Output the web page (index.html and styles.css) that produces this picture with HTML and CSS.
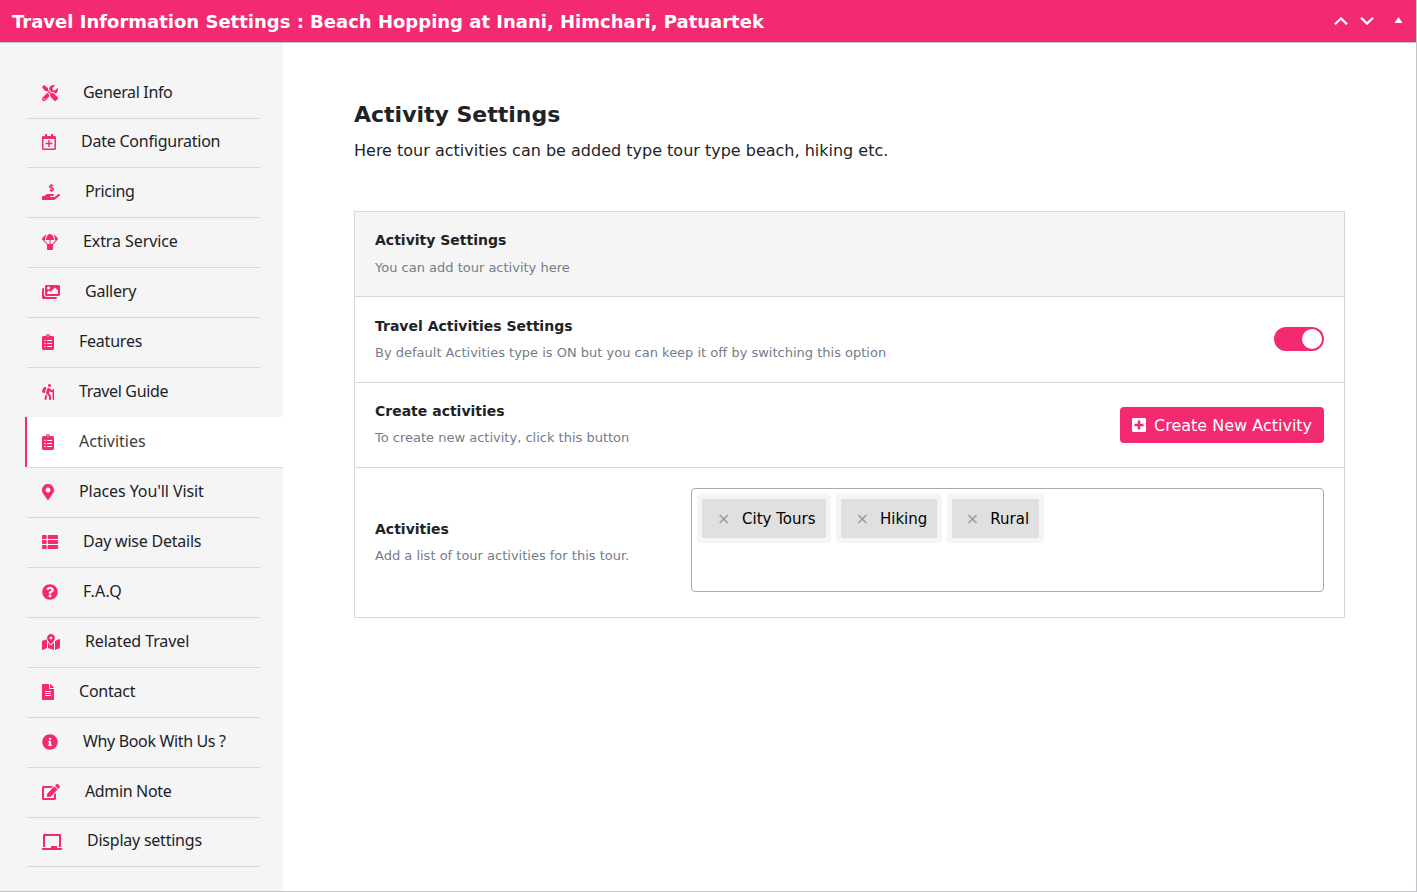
FILE: index.html
```html
<!DOCTYPE html>
<html lang="en">
<head>
<meta charset="utf-8">
<title>Travel Information Settings</title>
<link rel="stylesheet" href="styles.css">
</head>
<body>
<div class="metabox">
  <header class="bar">
    <h1 class="bar-title">Travel Information Settings : Beach Hopping at Inani, Himchari, Patuartek</h1>
    <div class="bar-actions">
      <svg class="chev" width="14" height="8" viewBox="0 0 14 8"><path d="M1 7.2 7 1.4l6 5.800"/></svg>
      <svg class="chev" width="14" height="8" viewBox="0 0 14 8"><path d="M1 .8l6 5.800L13 .8"/></svg>
      <svg class="tri" width="9" height="6" viewBox="0 0 9 6"><path d="M4.500 0l4 6h-8z"/></svg>
    </div>
  </header>
  <div class="body">
    <nav class="side">
      <a class="item"><svg class="ico" width="16" height="16" viewBox="0 0 512 512"><path d="M501.100 395.700L384 278.600c-23.100-23.100-57.600-27.600-85.400-13.900L192 158.100V96L64 0 0 64l96 128h62.100l106.600 106.600c-13.600 27.800-9.200 62.300 13.900 85.400l117.100 117.100c14.600 14.600 38.200 14.600 52.700 0l52.700-52.700c14.500-14.600 14.500-38.200 0-52.700zM331.700 225c28.300 0 54.900 11 74.900 31l19.400 19.400c15.800-6.900 30.800-16.500 43.800-29.500 37.100-37.100 49.700-89.300 37.900-136.700-2.200-9-13.500-12.100-20.100-5.500l-74.400 74.400-67.900-11.300L334 98.900l74.400-74.400c6.600-6.600 3.400-17.900-5.700-20.200-47.400-11.700-99.600.9-136.600 37.900-28.500 28.500-41.900 66.100-41.200 103.600l82.100 82.100c8.100-1.900 16.500-2.900 24.700-2.900zm-103.900 82l-56.700-56.700L18.700 402.800c-25 25-25 65.500 0 90.500s65.500 25 90.500 0l123.600-123.600c-7.600-19.900-9.900-41.600-5-62.700zM64 472c-13.200 0-24-10.800-24-24 0-13.300 10.700-24 24-24s24 10.700 24 24c0 13.200-10.700 24-24 24z"/></svg><span class="lbl lbl-tight">General Info</span></a>
      <a class="item item-short item-up"><svg class="ico" width="14" height="16" viewBox="0 0 448 512"><path d="M336 292v24c0 6.600-5.400 12-12 12h-76v76c0 6.600-5.400 12-12 12h-24c-6.600 0-12-5.400-12-12v-76h-76c-6.600 0-12-5.400-12-12v-24c0-6.600 5.400-12 12-12h76v-76c0-6.600 5.400-12 12-12h24c6.600 0 12 5.400 12 12v76h76c6.600 0 12 5.400 12 12zm112-180v352c0 26.500-21.500 48-48 48H48c-26.500 0-48-21.500-48-48V112c0-26.500 21.500-48 48-48h48V12c0-6.600 5.400-12 12-12h40c6.600 0 12 5.400 12 12v52h128V12c0-6.600 5.400-12 12-12h40c6.600 0 12 5.400 12 12v52h48c26.500 0 48 21.500 48 48zm-48 346V160H48v298c0 3.300 2.700 6 6 6h340c3.300 0 6-2.700 6-6z"/></svg><span class="lbl">Date Configuration</span></a>
      <a class="item"><svg class="ico" width="18" height="16" viewBox="0 0 576 512"><path d="M271.060,144.300l54.270,14.300a8.590,8.590,0,0,1,6.630,8.100c0,4.600-4.090,8.400-9.120,8.400h-35.600a30,30,0,0,1-11.190-2.200c-5.240-2.200-11.280-1.700-15.300,2l-19,17.500a11.680,11.680,0,0,0-2.250,2.660,11.420,11.420,0,0,0,3.880,15.740,83.770,83.770,0,0,0,34.510,11.500V240c0,8.800,7.830,16,17.370,16h17.370c9.550,0,17.380-7.200,17.380-16V222.400c32.930-3.600,57.840-31,53.500-63-3.150-23-22.460-41.300-46.560-47.700L282.680,97.400a8.590,8.590,0,0,1-6.630-8.100c0-4.600,4.090-8.400,9.120-8.400h35.600A30,30,0,0,1,332,83.100c5.230,2.200,11.280,1.700,15.300-2l19-17.500A11.310,11.310,0,0,0,368.470,61a11.430,11.430,0,0,0-3.840-15.780,83.820,83.820,0,0,0-34.520-11.500V16c0-8.800-7.820-16-17.370-16H295.370C285.820,0,278,7.200,278,16V33.600c-32.890,3.600-57.850,31-53.510,63C227.630,119.600,247,137.900,271.060,144.300ZM565.270,328.100c-11.800-10.700-30.200-10-42.600,0L430.270,402a63.640,63.640,0,0,1-40,14H272a16,16,0,0,1,0-32h78.290c15.900,0,30.710-10.900,33.250-26.600a31.200,31.200,0,0,0,.46-5.460A32,32,0,0,0,352,320H192a117.660,117.660,0,0,0-74.100,26.290L71.400,384H16A16,16,0,0,0,0,400v96a16,16,0,0,0,16,16H372.770a64,64,0,0,0,40-14L564,377a32,32,0,0,0,1.280-48.900Z"/></svg><span class="lbl lbl-tight">Pricing</span></a>
      <a class="item"><svg class="ico" width="16" height="16" viewBox="0 0 512 512"><path d="M511.900 175c-9.100-75.600-78.400-132.400-158.300-158.700C390 55.700 416 116.900 416 192h28.100L327.500 321.500c-2.500-.6-4.800-1.500-7.500-1.500h-48V192h112C384 76.800 315.100 0 256 0S128 76.800 128 192h112v128h-48c-2.700 0-5 .9-7.500 1.500L67.900 192H96c0-75.100 26-136.300 62.400-175.700C78.500 42.700 9.200 99.500.1 175c-1.100 9.100 6.800 17 16 17h8.700l136.700 151.900c-.7 2.600-1.600 5.200-1.600 8.100v128c0 17.700 14.300 32 32 32h128c17.700 0 32-14.300 32-32V352c0-2.900-.9-5.400-1.600-8.100L487.100 192h8.700c9.300 0 17.200-7.800 16.100-17z"/></svg><span class="lbl lbl-wide">Extra Service</span></a>
      <a class="item"><svg class="ico" width="18" height="16" viewBox="0 0 576 512"><path d="M480 416v16c0 26.510-21.490 48-48 48H48c-26.510 0-48-21.490-48-48V176c0-26.510 21.490-48 48-48h16v208c0 44.112 35.888 80 80 80h336zm96-80V80c0-26.510-21.490-48-48-48H144c-26.510 0-48 21.490-48 48v256c0 26.510 21.490 48 48 48h384c26.510 0 48-21.490 48-48zM256 128c0 26.510-21.490 48-48 48s-48-21.490-48-48 21.490-48 48-48 48 21.490 48 48zm-96 144l55.515-55.515c4.686-4.686 12.284-4.686 16.971 0L272 256l135.515-135.515c4.686-4.686 12.284-4.686 16.971 0L512 208v112H160v-48z"/></svg><span class="lbl">Gallery</span></a>
      <a class="item"><svg class="ico" width="12" height="16" viewBox="0 0 384 512"><path id="clipboard" d="M336 64h-80c0-35.300-28.700-64-64-64s-64 28.700-64 64H48C21.500 64 0 85.500 0 112v352c0 26.500 21.500 48 48 48h288c26.500 0 48-21.500 48-48V112c0-26.500-21.500-48-48-48zM96 424c-13.300 0-24-10.700-24-24s10.700-24 24-24 24 10.700 24 24-10.700 24-24 24zm0-96c-13.300 0-24-10.700-24-24s10.700-24 24-24 24 10.700 24 24-10.700 24-24 24zm0-96c-13.300 0-24-10.700-24-24s10.700-24 24-24 24 10.700 24 24-10.700 24-24 24zm96-192c13.300 0 24 10.700 24 24s-10.700 24-24 24-24-10.700-24-24 10.700-24 24-24zm128 368c0 4.400-3.600 8-8 8H168c-4.400 0-8-3.600-8-8v-16c0-4.400 3.600-8 8-8h144c4.400 0 8 3.600 8 8v16zm0-96c0 4.400-3.600 8-8 8H168c-4.400 0-8-3.600-8-8v-16c0-4.400 3.600-8 8-8h144c4.400 0 8 3.600 8 8v16zm0-96c0 4.400-3.600 8-8 8H168c-4.400 0-8-3.600-8-8v-16c0-4.400 3.600-8 8-8h144c4.400 0 8 3.600 8 8v16z"/></svg><span class="lbl">Features</span></a>
      <a class="item"><svg class="ico" width="12" height="16" viewBox="0 0 384 512"><path d="M80.950 472.230c-4.280 17.160 6.140 34.530 23.280 38.810 2.610.66 5.220.95 7.800.95 14.330 0 27.370-9.700 31.020-24.230l25.240-100.970-52.780-52.780-34.560 138.220zm14.890-196.120L137 117c2.190-8.420-3.140-16.950-11.920-19.060-43.880-10.520-88.350 15.070-99.320 57.170L.49 253.240c-2.190 8.420 3.140 16.950 11.920 19.060l63.560 15.250c8.790 2.100 17.680-3.020 19.870-11.440zM368 160h-16c-8.840 0-16 7.160-16 16v16h-34.750l-46.780-46.780C243.380 134.110 228.610 128 212.910 128c-27.020 0-50.470 18.300-57.030 44.520l-26.920 107.720a32.012 32.012 0 0 0 8.420 30.390L224 397.250V480c0 17.670 14.330 32 32 32s32-14.330 32-32v-82.750c0-17.090-6.660-33.160-18.750-45.250l-46.820-46.820c.15-.5.49-.89.62-1.410l19.890-79.570 22.430 22.430c6 6 14.140 9.380 22.620 9.380h48v240c0 8.840 7.160 16 16 16h16c8.840 0 16-7.160 16-16V176c.01-8.840-7.150-16-15.990-16zM240 96c26.510 0 48-21.490 48-48S266.510 0 240 0s-48 21.490-48 48 21.490 48 48 48z"/></svg><span class="lbl lbl-tight">Travel Guide</span></a>
      <a class="item item-active"><svg class="ico" width="12" height="16" viewBox="0 0 384 512"><use href="#clipboard"/></svg><span class="lbl lbl-active">Activities</span></a>
      <a class="item"><svg class="ico" width="12" height="16" viewBox="0 0 384 512"><path d="M172.268 501.670C26.970 291.031 0 269.413 0 192 0 85.961 85.961 0 192 0s192 85.961 192 192c0 77.413-26.970 99.031-172.268 309.670-9.535 13.774-29.930 13.773-39.464 0zM192 272c44.183 0 80-35.817 80-80s-35.817-80-80-80-80 35.817-80 80 35.817 80 80 80z"/></svg><span class="lbl lbl-wide">Places You'll Visit</span></a>
      <a class="item"><svg class="ico" width="16" height="16" viewBox="0 0 512 512"><path d="M149.333 216v80c0 13.255-10.745 24-24 24H24c-13.255 0-24-10.745-24-24v-80c0-13.255 10.745-24 24-24h101.333c13.255 0 24 10.745 24 24zM0 376v80c0 13.255 10.745 24 24 24h101.333c13.255 0 24-10.745 24-24v-80c0-13.255-10.745-24-24-24H24c-13.255 0-24 10.745-24 24zM125.333 32H24C10.745 32 0 42.745 0 56v80c0 13.255 10.745 24 24 24h101.333c13.255 0 24-10.745 24-24V56c0-13.255-10.745-24-24-24zm80 448H488c13.255 0 24-10.745 24-24v-80c0-13.255-10.745-24-24-24H205.333c-13.255 0-24 10.745-24 24v80c0 13.255 10.745 24 24 24zm-24-424v80c0 13.255 10.745 24 24 24H488c13.255 0 24-10.745 24-24V56c0-13.255-10.745-24-24-24H205.333c-13.255 0-24 10.745-24 24zm24 264H488c13.255 0 24-10.745 24-24v-80c0-13.255-10.745-24-24-24H205.333c-13.255 0-24 10.745-24 24v80c0 13.255 10.745 24 24 24z"/></svg><span class="lbl">Day wise Details</span></a>
      <a class="item"><svg class="ico" width="16" height="16" viewBox="0 0 512 512"><path d="M504 256c0 136.997-111.043 248-248 248S8 392.997 8 256C8 119.083 119.043 8 256 8s248 111.083 248 248zM262.655 90c-54.497 0-89.255 22.957-116.549 63.758-3.536 5.286-2.353 12.415 2.715 16.258l34.699 26.310c5.205 3.947 12.621 3.008 16.665-2.122 17.864-22.658 30.113-35.797 57.303-35.797 20.429 0 45.698 13.148 45.698 32.958 0 14.976-12.363 22.667-32.534 33.976C247.128 238.528 216 254.941 216 296v4c0 6.627 5.373 12 12 12h56c6.627 0 12-5.373 12-12v-1.333c0-28.462 83.186-29.647 83.186-106.667 0-58.002-60.165-102-116.531-102zM256 338c-25.365 0-46 20.635-46 46 0 25.364 20.635 46 46 46s46-20.636 46-46c0-25.365-20.635-46-46-46z"/></svg><span class="lbl lbl-loose">F.A.Q</span></a>
      <a class="item"><svg class="ico" width="18" height="16" viewBox="0 0 576 512"><path d="M288 0c-69.590 0-126 56.410-126 126 0 56.260 82.350 158.800 113.900 196.020 6.390 7.540 17.820 7.540 24.200 0C331.650 284.800 414 182.260 414 126 414 56.410 357.590 0 288 0zm0 168c-23.200 0-42-18.800-42-42s18.800-42 42-42 42 18.800 42 42-18.800 42-42 42zM20.120 215.950A32.006 32.006 0 0 0 0 245.660v250.320c0 11.320 11.430 19.060 21.940 14.860L160 448V214.920c-8.840-15.980-16.070-31.540-21.250-46.420L20.120 215.950zM288 359.670c-14.070 0-27.380-6.180-36.510-16.960-19.660-23.200-40.570-49.620-59.490-76.720v182l192 64V266c-18.920 27.090-39.820 53.520-59.490 76.720-9.130 10.770-22.440 16.950-36.510 16.950zm266.060-198.510L416 224v288l139.880-55.950A31.996 31.996 0 0 0 576 426.340V176.020c0-11.320-11.430-19.060-21.940-14.860z"/></svg><span class="lbl lbl-wide">Related Travel</span></a>
      <a class="item"><svg class="ico" width="12" height="16" viewBox="0 0 384 512"><path d="M224 136V0H24C10.700 0 0 10.700 0 24v464c0 13.300 10.700 24 24 24h336c13.300 0 24-10.700 24-24V160H248c-13.200 0-24-10.800-24-24zm64 236c0 6.600-5.400 12-12 12H108c-6.600 0-12-5.400-12-12v-8c0-6.600 5.400-12 12-12h168c6.600 0 12 5.400 12 12v8zm0-64c0 6.600-5.400 12-12 12H108c-6.600 0-12-5.400-12-12v-8c0-6.600 5.400-12 12-12h168c6.600 0 12 5.400 12 12v8zm0-72v8c0 6.600-5.400 12-12 12H108c-6.600 0-12-5.400-12-12v-8c0-6.600 5.400-12 12-12h168c6.600 0 12 5.400 12 12zm96-114.100v6.100H256V0h6.100c6.400 0 12.500 2.500 17 7l97.900 98c4.500 4.500 7 10.600 7 16.900z"/></svg><span class="lbl">Contact</span></a>
      <a class="item"><svg class="ico" width="16" height="16" viewBox="0 0 512 512"><path d="M256 8C119.043 8 8 119.083 8 256c0 136.997 111.043 248 248 248s248-111.003 248-248C504 119.083 392.957 8 256 8zm0 110c23.196 0 42 18.804 42 42s-18.804 42-42 42-42-18.804-42-42 18.804-42 42-42zm56 254c0 6.627-5.373 12-12 12h-88c-6.627 0-12-5.373-12-12v-24c0-6.627 5.373-12 12-12h12v-64h-12c-6.627 0-12-5.373-12-12v-24c0-6.627 5.373-12 12-12h64c6.627 0 12 5.373 12 12v100h12c6.627 0 12 5.373 12 12v24z"/></svg><span class="lbl lbl-tight">Why Book With Us ?</span></a>
      <a class="item"><svg class="ico" width="18" height="16" viewBox="0 0 576 512"><path d="M402.600 83.200l90.200 90.200c3.800 3.800 3.800 10 0 13.800L274.400 405.600l-92.800 10.300c-12.400 1.400-22.900-9.100-21.500-21.500l10.300-92.800L388.800 83.200c3.800-3.800 10-3.800 13.800 0zm162-22.900l-48.800-48.800c-15.200-15.200-39.900-15.200-55.200 0l-35.400 35.400c-3.800 3.800-3.800 10 0 13.800l90.200 90.200c3.800 3.800 10 3.800 13.800 0l35.400-35.400c15.200-15.300 15.200-40 0-55.200zM384 346.200V448H64V128h229.800c3.200 0 6.200-1.300 8.500-3.500l40-40c7.600-7.600 2.200-20.500-8.500-20.500H48C21.500 64 0 85.500 0 112v352c0 26.500 21.500 48 48 48h352c26.500 0 48-21.500 48-48V306.200c0-10.700-12.900-16-20.500-8.500l-40 40c-2.200 2.300-3.500 5.300-3.500 8.500z"/></svg><span class="lbl lbl-tight">Admin Note</span></a>
      <a class="item item-short"><svg class="ico" width="20" height="16" viewBox="0 0 640 512"><path d="M96 64h448v352h64V40c0-22.060-17.940-40-40-40H72C49.940 0 32 17.940 32 40v376h64V64zm528 384H480v-64H288v64H16c-8.840 0-16 7.160-16 16v32c0 8.840 7.160 16 16 16h608c8.840 0 16-7.160 16-16v-32c0-8.840-7.160-16-16-16z"/></svg><span class="lbl lbl-up">Display settings</span></a>
    </nav>
    <main class="main">
      <h2 class="heading">Activity Settings</h2>
      <p class="intro">Here tour activities can be added type tour type beach, hiking etc.</p>
      <section class="panel">
        <div class="row row-head">
          <div class="info"><h3 class="name">Activity Settings</h3><p class="desc">You can add tour activity here</p></div>
        </div>
        <div class="row row-toggle">
          <div class="info"><h3 class="name">Travel Activities Settings</h3><p class="desc">By default Activities type is ON but you can keep it off by switching this option</p></div>
          <span class="switch"><span class="knob"></span></span>
        </div>
        <div class="row row-create">
          <div class="info"><h3 class="name">Create activities</h3><p class="desc">To create new activity, click this button</p></div>
          <button class="btn"><svg class="btn-ico" width="14" height="16" viewBox="0 0 448 512"><path d="M400 32H48C21.500 32 0 53.500 0 80v352c0 26.500 21.500 48 48 48h352c26.500 0 48-21.500 48-48V80c0-26.500-21.500-48-48-48zm-32 252c0 6.600-5.400 12-12 12h-92v92c0 6.600-5.400 12-12 12h-56c-6.600 0-12-5.400-12-12v-92H92c-6.600 0-12-5.400-12-12v-56c0-6.600 5.400-12 12-12h92v-92c0-6.600 5.400-12 12-12h56c6.600 0 12 5.400 12 12v92h92c6.600 0 12 5.400 12 12v56z"/></svg>Create New Activity</button>
        </div>
        <div class="row row-list">
          <div class="info"><h3 class="name">Activities</h3><p class="desc">Add a list of tour activities for this tour.</p></div>
          <div class="select">
            <span class="chip"><span class="x">×</span>City Tours</span>
            <span class="chip"><span class="x">×</span>Hiking</span>
            <span class="chip"><span class="x">×</span>Rural</span>
          </div>
        </div>
      </section>
    </main>
  </div>
</div>
</body>
</html>
```

FILE: styles.css
```css
* { box-sizing: border-box; }
body { margin: 0; background: #fff; color: #1d2327; font-family: "DejaVu Sans", sans-serif; overflow: hidden; }
h1, h2, h3, p { margin: 0; white-space: nowrap; }

.metabox { display: flex; flex-direction: column; width: 1417px; height: 892px; border: solid #c3c4c7; border-width: 0 1px 1px 0; }

.bar { display: flex; justify-content: space-between; height: 43px; padding: 0 13px 0 12px; background: #f32971; border-bottom: 1px solid #c3c4c7; color: #fff; }
.bar-title { font-size: 18px; line-height: 43px; font-weight: 700; }
.bar-actions { display: flex; padding-top: 17px; gap: 12px; }
.chev { fill: none; stroke: #fff; stroke-width: 2.2; }
.tri { fill: #fff; margin-left: 8px; }

.body { display: flex; flex: 1; }
.side { width: 283px; padding: 26px 23px 0 27px; background: #f5f5f5; font-family: "Noto Sans", sans-serif; font-size: 16px; }
.item { display: flex; align-items: flex-start; gap: 25px; height: 50px; padding: 16px 0 0 15px; border-bottom: 1px solid #d8d8d8; }
.item-short { height: 49px; }
.item-up { padding-top: 15px; }
.ico { fill: #f32971; flex: none; }
.lbl { line-height: 22px; margin-top: -4px; white-space: nowrap; letter-spacing: -0.23px; }
.lbl-tight { letter-spacing: -0.35px; }
.lbl-wide { letter-spacing: -0.09px; }
.lbl-active { letter-spacing: 0; }
.lbl-loose { letter-spacing: 0.2px; }
.lbl-up { margin-top: -5px; }
.item-active { position: relative; height: 51px; margin: -1px -23px 0 0; padding-top: 17px; background: #fff; color: #3c3c3c; }
.item-active::before { content: ""; position: absolute; left: -2px; top: 0; width: 2px; height: 50px; background: #f32971; }

.main { flex: 1; padding: 56px 71px 0; }
.heading { font-size: 22px; line-height: 32px; }
.intro { margin-top: 8px; font-size: 16px; line-height: 24px; }
.panel { margin-top: 48px; border: 1px solid #d8d8d8; }
.row { display: flex; justify-content: space-between; padding: 0 20px; border-bottom: 1px solid #d8d8d8; }
.row:last-child { border-bottom: 0; }
.row-head { height: 85px; padding-top: 18px; background: #f5f5f5; }
.row-toggle { height: 86px; padding-top: 19px; }
.row-create { height: 85px; padding-top: 18px; }
.row-list { height: 149px; padding-top: 20px; }
.row-list .info { padding-top: 31px; }
.name { font-size: 14px; line-height: 20px; }
.desc { margin-top: 7px; font-size: 13px; line-height: 20px; color: #747c8b; }
.row-head .desc { margin-top: 8px; }

.switch { width: 50px; height: 24px; margin-top: 11px; padding: 2px; border-radius: 12px; background: #f32971; display: flex; justify-content: flex-end; }
.knob { width: 20px; height: 20px; border-radius: 50%; background: #fff; }

.btn { display: flex; align-items: center; gap: 8px; width: 204px; height: 36px; margin-top: 6px; padding: 0 12px; border: 0; border-radius: 4px; background: #f32971; color: #fff; font: 16px "DejaVu Sans", sans-serif; white-space: nowrap; }
.btn-ico { fill: #fff; flex: none; }

.select { display: flex; align-items: flex-start; gap: 5px; width: 633px; height: 104px; padding: 5px; border: 1px solid #aaa; border-radius: 4px; font-size: 15px; color: #000; }
.chip { display: flex; height: 49px; padding: 1px 9.5px 0 14px; line-height: 39px; border: 5px solid #f5f5f5; border-radius: 4px; background: #e0e0e0; background-clip: padding-box; white-space: nowrap; }
.chip:first-child { padding: 1px 11px 0 15px; }
.x { width: 24.5px; margin-top: -1px; font-size: 16px; color: #999; }
.chip:first-child .x { width: 25px; }
```
